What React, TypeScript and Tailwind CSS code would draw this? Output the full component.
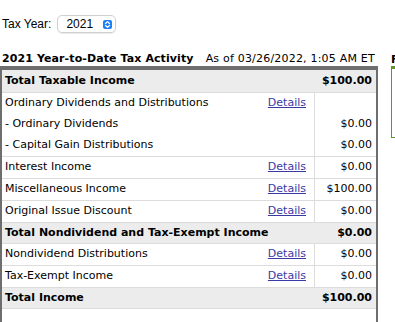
import React from 'react';

type Row = {
  label: string;
  amount: string;
  total?: boolean;
  details?: boolean;
  noBorder?: boolean;
  tall?: boolean;
};

const rows: Row[] = [
  { label: 'Total Taxable Income', amount: '$100.00', total: true, tall: true },
  { label: 'Ordinary Dividends and Distributions', amount: '', details: true, noBorder: true },
  { label: '- Ordinary Dividends', amount: '$0.00', noBorder: true },
  { label: '- Capital Gain Distributions', amount: '$0.00' },
  { label: 'Interest Income', amount: '$0.00', details: true },
  { label: 'Miscellaneous Income', amount: '$100.00', details: true },
  { label: 'Original Issue Discount', amount: '$0.00', details: true },
  { label: 'Total Nondividend and Tax-Exempt Income', amount: '$0.00', total: true },
  { label: 'Nondividend Distributions', amount: '$0.00', details: true },
  { label: 'Tax-Exempt Income', amount: '$0.00', details: true },
  { label: 'Total Income', amount: '$100.00', total: true },
];

function TaxRow({ row }: { row: Row }) {
  const height = row.tall ? 'h-[23px]' : 'h-[21px]';
  const border = row.noBorder ? '' : 'border-b border-[#dcdcdc]';

  if (row.total) {
    return (
      <div className={`flex items-center bg-[#ececec] font-bold ${height} ${border}`}>
        <div className="flex-1 pl-[3px] whitespace-nowrap">{row.label}</div>
        <div className="w-[62px] pr-[4px] text-right">{row.amount}</div>
      </div>
    );
  }

  return (
    <div className={`flex ${border}`}>
      <div className={`flex-1 flex items-center pl-[3px] whitespace-nowrap ${height}`}>{row.label}</div>
      <div className={`w-[70px] flex items-center justify-end pr-[8px] ${height}`}>
        {row.details && <a className="text-[#3a3aa6] underline cursor-pointer">Details</a>}
      </div>
      <div className={`w-[62px] flex items-center justify-end pr-[4px] border-l border-[#dcdcdc] ${height}`}>
        {row.amount}
      </div>
    </div>
  );
}

export default function App() {
  return (
    <div className="w-[395px] h-[322px] overflow-hidden bg-white text-black">
      {/* Tax year picker */}
      <div className="flex items-center pt-[15px] pl-[2px] font-['Liberation_Sans',Arial,sans-serif] text-[12px]">
        <span>Tax Year:</span>
        <div className="ml-[6px] flex items-center w-[59px] h-[18px] border border-[#cfcfcf] rounded-[5px] shadow-[0_1px_1px_rgba(0,0,0,0.08)] pl-[8px] pr-[3px]">
          <span className="flex-1">2021</span>
          <span className="w-[9px] h-[9px] rounded-[2px] bg-[#1b7ffa] flex items-center justify-center">
            <svg width="7" height="9" viewBox="0 0 7 9" fill="none" stroke="white" strokeWidth="1.3" strokeLinecap="round" strokeLinejoin="round">
              <path d="M1.5 3.5 L3.5 1.6 L5.5 3.5" />
              <path d="M1.5 5.5 L3.5 7.4 L5.5 5.5" />
            </svg>
          </span>
        </div>
      </div>

      <div className="flex mt-[19px] font-['DejaVu_Sans',Verdana,sans-serif] text-[11px]">
        {/* Activity table */}
        <div className="w-[378px] shrink-0">
          <div className="flex items-center h-[14px] pl-[2px] pr-[3px]">
            <span className="font-bold tracking-[0.1px]">2021 Year-to-Date Tax Activity</span>
            <span className="ml-[12px] tracking-[0.2px]">As of 03/26/2022, 1:05 AM ET</span>
          </div>
          <div className="border-t-[4px] border-l-2 border-r-2 border-[#6e6e6e] pb-[30px]">
            {rows.map((row) => (
              <TaxRow key={row.label} row={row} />
            ))}
          </div>
        </div>

        {/* Side panel, cut off by the window edge */}
        <div className="ml-[13px] w-[200px] shrink-0">
          <div className="h-[14px] font-bold whitespace-nowrap">Fund Activity</div>
          <div className="h-[72px] border border-t-[3px] border-[#5f9a1e]"></div>
        </div>
      </div>
    </div>
  );
}
